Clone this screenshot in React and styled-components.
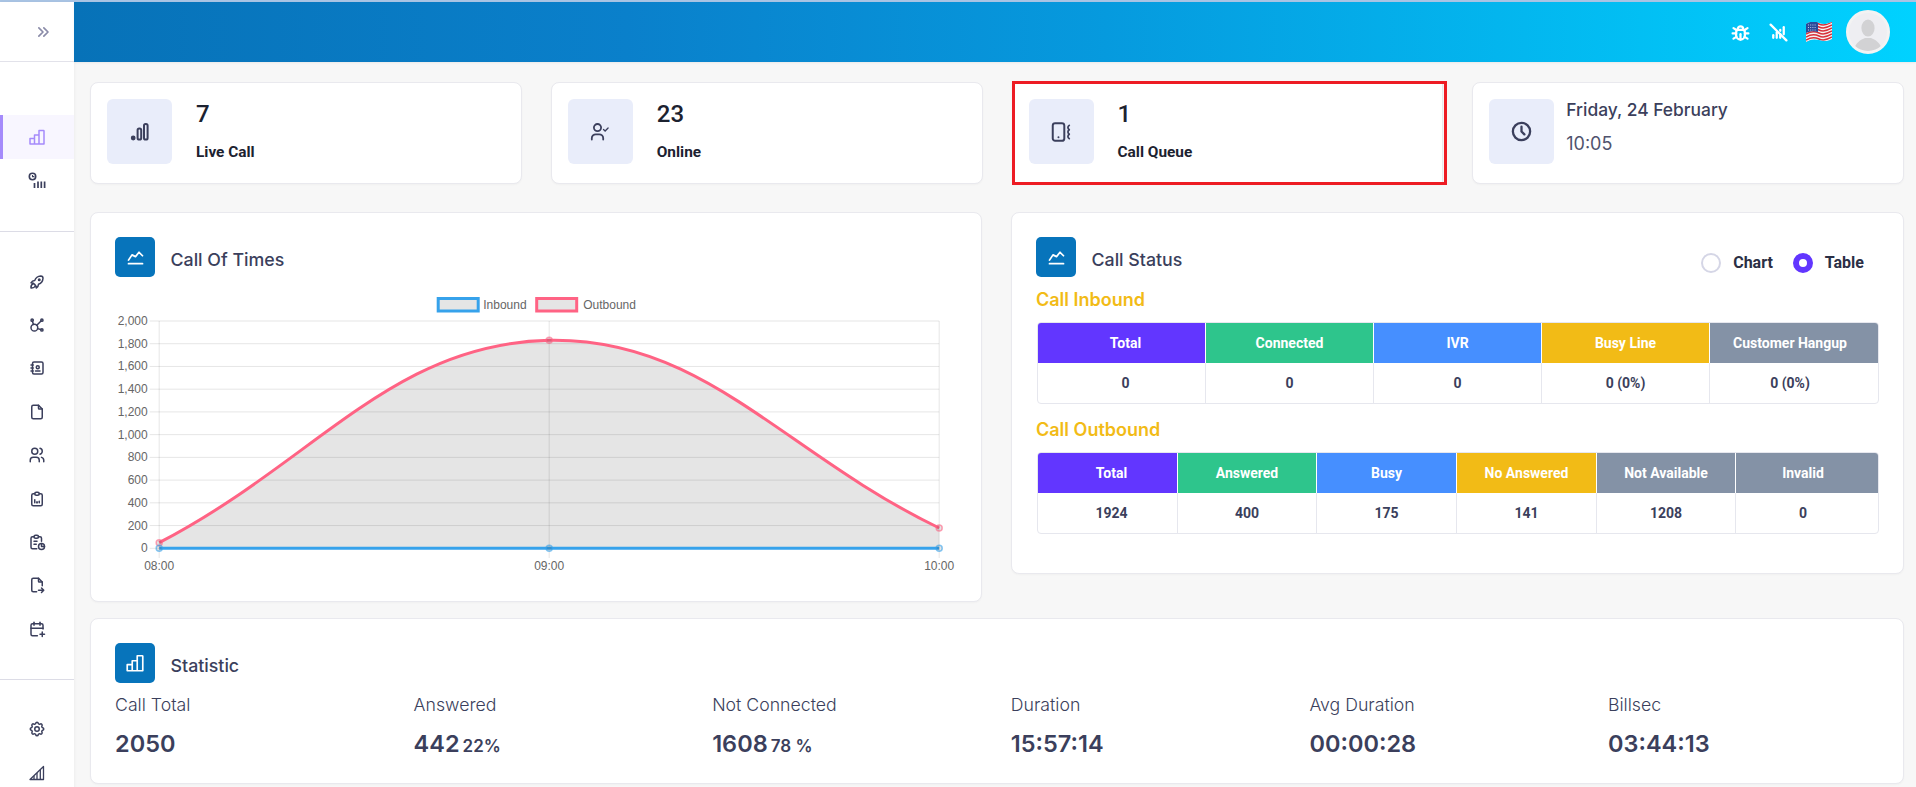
import React from 'react';
import styled, { createGlobalStyle } from 'styled-components';
import {
  TbChevronsRight, TbRocket, TbAffiliate, TbAddressBook, TbFile, TbUsers,
  TbClipboardData, TbReport, TbFileExport, TbCalendarPlus, TbSettings,
  TbBug, TbAntennaBarsOff, TbClock, TbChartLine,
} from 'react-icons/tb';

const GlobalStyle = createGlobalStyle`
  html, body { margin: 0; padding: 0; height: 787px; overflow: hidden; }
  body { background: #f7f7f7; font-family: Inter, "Liberation Sans", sans-serif; }
  * { box-sizing: border-box; }
`;

const Page = styled.div`
  display: grid;
  grid-template-columns: 74px 1fr;
  border-top: 2px solid #a9c4e4;
  height: 787px;
`;

const Sidebar = styled.aside`
  background: #fff;
  display: flex;
  flex-direction: column;
  box-shadow: 1px 0 3px rgba(0, 0, 0, 0.04);
`;

const SideTop = styled.div`
  height: 60px;
  display: flex;
  align-items: center;
  justify-content: center;
  padding-left: 11px;
  color: #8a8ba8;
  font-size: 20px;
  border-bottom: 1px solid #e2e2ea;
`;

const SideGroup = styled.nav`
  padding: ${(p) => (p.$first ? '53px' : '28px')} 0 28px;
  border-bottom: ${(p) => (p.$last ? 'none' : '1px solid #dcdce6')};
`;

const SideItem = styled.div`
  height: ${(p) => p.$h || 43.4}px;
  display: flex;
  align-items: center;
  justify-content: center;
  font-size: 18px;
  color: ${(p) => (p.$active ? '#a58bfb' : '#3b3f5c')};
  background: ${(p) => (p.$active ? '#f8f6ff' : 'transparent')};
  border-left: 3px solid ${(p) => (p.$active ? '#a58bfb' : 'transparent')};
  padding-right: 3px;
`;

const Main = styled.main`
  min-width: 0;
`;

const Header = styled.header`
  height: 60px;
  background: linear-gradient(90deg, #0772b8 0%, #0a80cb 30%, #069ade 56%, #00d2ff 100%);
  display: flex;
  align-items: center;
  justify-content: flex-end;
  padding-right: 26px;
  color: #fff;
  box-shadow: 0 1px 2px rgba(0, 0, 0, 0.06);
`;

const HeaderIcon = styled.span`
  display: flex;
  font-size: 21px;
  margin-right: 17px;
`;

const Flag = styled.svg`
  width: 26px;
  height: 20px;
  margin-right: 14px;
`;

const Avatar = styled.div`
  width: 44px;
  height: 44px;
  border-radius: 50%;
  background: #eeeef2;
  border: 3px solid #f3f3f3;
  overflow: hidden;
  display: flex;
`;

const Content = styled.div`
  padding: 20px 12px 0 16px;
`;

const TopRow = styled.div`
  display: grid;
  grid-template-columns: repeat(4, 1fr);
  gap: 29px;
`;

const Card = styled.section`
  background: #fff;
  border: 1px solid #e9e9ee;
  border-radius: 8px;
  box-shadow: 0 1px 2px rgba(0, 0, 0, 0.03);
`;

const TopCard = styled(Card)`
  position: relative;
  height: 102px;
  padding: 16px;
  display: flex;
  gap: ${(p) => p.$gap || 24}px;
  ${(p) =>
    p.$marked &&
    `
    border-radius: 0;
    &::after {
      content: '';
      position: absolute;
      inset: -2px -5px -2px -1px;
      border: 3px solid #ed1c24;
    }
  `}
`;

const IconBox = styled.div`
  width: 65px;
  height: 65px;
  flex: none;
  border-radius: 6px;
  background: #e9edfa;
  color: #3b3f5c;
  font-size: 23px;
  display: flex;
  align-items: center;
  justify-content: center;
`;

const TopText = styled.div`
  display: flex;
  flex-direction: column;
`;

const TopNumber = styled.div`
  margin-top: 1px;
  font: 500 24px/28px Roboto, sans-serif;
  color: #1c2230;
`;

const TopLabel = styled.div`
  margin-top: 14px;
  font: 700 15.4px/20px Roboto, sans-serif;
  color: #1c2230;
`;

const DateLine = styled.div`
  font: 500 17.4px/24px Inter, sans-serif;
  color: #3b3f5c;
  margin-top: -1px;
`;

const TimeLine = styled.div`
  font: 400 18px/24px Inter, sans-serif;
  color: #50536e;
  margin-top: 10px;
`;

const MidRow = styled.div`
  display: grid;
  grid-template-columns: 1fr 1fr;
  gap: 29px;
  align-items: start;
  margin-top: 28px;
`;

const Panel = styled(Card)`
  padding: 24px;
  height: ${(p) => p.$h}px;
`;

const StatPanel = styled(Panel)`
  margin-top: 15.5px;
`;

const PanelHead = styled.div`
  display: flex;
  align-items: flex-start;
  gap: 15.5px;
`;

const HeadIcon = styled.div`
  width: 40px;
  height: 40px;
  flex: none;
  border-radius: 5px;
  background: #0774bb;
  color: #fff;
  font-size: 21px;
  display: flex;
  align-items: center;
  justify-content: center;
`;

const PanelTitle = styled.h3`
  margin: 12px 0 0;
  font: 500 17.8px/22px Inter, sans-serif;
  color: #3b3f5c;
`;

const ChartSvg = styled.svg`
  display: block;
  width: 842px;
  height: 300px;
  margin-top: 10px;
  font-family: "Liberation Sans", Arial, sans-serif;
  font-size: 12px;
  fill: #666;
`;

const Radios = styled.div`
  margin-left: auto;
  margin-right: 15px;
  margin-top: 16px;
  display: flex;
  align-items: center;
  font: 700 16px/20px Roboto, sans-serif;
  color: #2b2f45;
`;

const Radio = styled.span`
  width: 20px;
  height: 20px;
  border-radius: 50%;
  margin-right: 12px;
  margin-left: ${(p) => (p.$on ? '20px' : '0')};
  background: #fff;
  border: ${(p) => (p.$on ? '6px solid #6236ff' : '2px solid #d5d6e6')};
`;

const SubTitle = styled.h4`
  margin: ${(p) => p.$top}px 0 11px;
  font: 600 18px/22px Inter, sans-serif;
  color: #f2bb16;
`;

const StatusTable = styled.table`
  width: 840px;
  margin-left: 1px;
  border-collapse: separate;
  border-spacing: 0;
  table-layout: fixed;
  border: 1px solid #e6e7ee;
  border-radius: 4px;
  overflow: hidden;
  font: 700 14px/20px Roboto, sans-serif;

  th, td {
    height: 40px;
    padding: 0;
    text-align: center;
    vertical-align: middle;
    border-right: 1px solid #e6e7ee;
  }
  th:first-child, td:first-child { padding-left: 8px; }
  th:last-child, td:last-child { border-right: none; padding-right: 8px; }
  th { color: #fff; font-weight: 700; border-right-color: #fff; }
  td { color: #3b3f5c; }
`;

const HeadCell = styled.th`
  background: ${(p) => p.$color};
`;

const StatsGrid = styled.div`
  display: grid;
  grid-template-columns: repeat(6, 1fr);
  gap: 27.6px;
  margin-top: 10px;
`;

const StatLabel = styled.div`
  font: 300 17.7px/24px Inter, sans-serif;
  color: #3b3f5c;
`;

const StatValue = styled.div`
  margin-top: 12px;
  font: 600 23.5px/30px Inter, sans-serif;
  color: #3b3f5c;
`;

const StatPercent = styled.small`
  font-size: 17px;
  margin-left: 3px;
`;

const COLORS = { total: '#6236ff', green: '#2ec58c', blue: '#468fff', yellow: '#f2bb16', gray: '#8492a6' };

const inbound = {
  heads: [['Total', COLORS.total], ['Connected', COLORS.green], ['IVR', COLORS.blue], ['Busy Line', COLORS.yellow], ['Customer Hangup', COLORS.gray]],
  values: ['0', '0', '0', '0 (0%)', '0 (0%)'],
};

const outbound = {
  heads: [['Total', COLORS.total], ['Answered', COLORS.green], ['Busy', COLORS.blue], ['No Answered', COLORS.yellow], ['Not Available', COLORS.gray], ['Invalid', COLORS.gray]],
  values: ['1924', '400', '175', '141', '1208', '0'],
};

const stats = [
  { label: 'Call Total', value: '2050' },
  { label: 'Answered', value: '442', percent: '22%' },
  { label: 'Not Connected', value: '1608', percent: '78 %' },
  { label: 'Duration', value: '15:57:14' },
  { label: 'Avg Duration', value: '00:00:28' },
  { label: 'Billsec', value: '03:44:13' },
];

// chart geometry is kept in page pixels, the svg viewBox starts at the chart's corner
const X = [159.5, 549.5, 939.5];
const Y0 = 548.3;
const STEP = 22.73;
const yTicks = ['0', '200', '400', '600', '800', '1,000', '1,200', '1,400', '1,600', '1,800', '2,000'];
const AREA = 'M159.5 542.7C315.5 461.7 392.3 343.3 549.5 340.3C704.3 337.4 783.5 452.9 939.5 528';

function Dot({ x, y, color }) {
  return <circle cx={x} cy={y} r="3" fill="rgba(0,0,0,0.1)" stroke={color} strokeOpacity="0.6" strokeWidth="1.5" />;
}

function CallChart() {
  return (
    <ChartSvg viewBox="115.3 287 842 300">
      <rect x="438.5" y="298.5" width="40" height="12.5" fill="rgba(0,0,0,0.1)" stroke="#36a2eb" strokeWidth="3" />
      <text x="483.5" y="309">Inbound</text>
      <rect x="537" y="298.5" width="40" height="12.5" fill="rgba(0,0,0,0.1)" stroke="#ff6384" strokeWidth="3" />
      <text x="583.5" y="309">Outbound</text>

      {yTicks.map((t, i) => {
        const y = Y0 - i * STEP;
        return (
          <g key={t}>
            <line x1="150" x2="939.5" y1={y} y2={y} stroke="rgba(0,0,0,0.1)" />
            <text x="148" y={y + 4} textAnchor="end">{t}</text>
          </g>
        );
      })}
      {X.map((x, i) => (
        <g key={x}>
          <line x1={x} x2={x} y1="321" y2="558" stroke="rgba(0,0,0,0.1)" />
          <text x={x} y="570" textAnchor="middle">{['08:00', '09:00', '10:00'][i]}</text>
        </g>
      ))}

      <path d={`${AREA}L939.5 ${Y0}L159.5 ${Y0}Z`} fill="rgba(0,0,0,0.1)" />
      <path d={AREA} fill="none" stroke="#ff6384" strokeWidth="3" />
      <Dot x={159.5} y={542.7} color="#ff6384" />
      <Dot x={549.5} y={340.3} color="#ff6384" />
      <Dot x={939.5} y={528} color="#ff6384" />
      <line x1="159.5" x2="939.5" y1={Y0} y2={Y0} stroke="#36a2eb" strokeWidth="3" />
      {X.map((x) => <Dot key={x} x={x} y={Y0} color="#36a2eb" />)}
    </ChartSvg>
  );
}

function StatusGrid({ heads, values, widths }) {
  return (
    <StatusTable>
      <colgroup>
        {widths.map((w, i) => <col key={i} style={{ width: w }} />)}
      </colgroup>
      <thead>
        <tr>{heads.map(([name, color]) => <HeadCell key={name} $color={color}>{name}</HeadCell>)}</tr>
      </thead>
      <tbody>
        <tr>{values.map((v, i) => <td key={i}>{v}</td>)}</tr>
      </tbody>
    </StatusTable>
  );
}

// hand drawn icons for the ones the packages don't have in this shape
function BarsIcon({ size = 18 }) {
  return (
    <svg width={size} height={size} viewBox="0 0 18 18" fill="none" stroke="currentColor" strokeWidth="1.5" strokeLinejoin="round">
      <path d="M2 10.5h4.5V16H2zM6.5 7H11v9H6.5zM11 2.5h4.5a.5.5 0 0 1 .5.5v13h-5z" />
    </svg>
  );
}

function ClockBars() {
  return (
    <svg width="18" height="18" viewBox="0 0 18 18" fill="none" stroke="currentColor">
      <circle cx="4.5" cy="4.5" r="3.2" strokeWidth="1.6" />
      <path d="M4.5 3v1.6H6.4" strokeWidth="1.1" />
      <path d="M6.5 11v5M10 9.5V16M13.3 9.5V16M16.6 9.5V16" strokeWidth="1.7" />
    </svg>
  );
}

function SignalTriangle() {
  return (
    <svg width="18" height="18" viewBox="0 0 18 18" fill="none" stroke="currentColor" strokeWidth="1.3" strokeLinejoin="round">
      <path d="M2 15.5L15.5 2.5v13z" />
      <path d="M6 15V12M9 15V9M12.3 15V6" />
    </svg>
  );
}

function LiveBars() {
  return (
    <svg width="20" height="20" viewBox="0 0 20 20" fill="none" stroke="currentColor" strokeWidth="2" strokeLinejoin="round">
      <circle cx="3.2" cy="16" r="1.4" fill="currentColor" />
      <rect x="7.6" y="6.5" width="3.6" height="11" rx="1.6" />
      <rect x="14" y="2" width="3.6" height="15.5" rx="1.6" />
    </svg>
  );
}

function UserCheckIcon() {
  return (
    <svg width="20" height="20" viewBox="0 0 20 20" fill="none" stroke="currentColor" strokeWidth="1.8" strokeLinecap="round">
      <circle cx="7.5" cy="5.6" r="3.6" />
      <path d="M1.8 17.5v-1.2a4 4 0 0 1 4-4h3.4a4 4 0 0 1 4 4v1.2" />
      <path d="M13.5 7.5l1.6 1.5 3-3" strokeWidth="1.3" />
    </svg>
  );
}

function PhoneQueueIcon() {
  return (
    <svg width="22" height="22" viewBox="0 0 20 20" fill="none" stroke="currentColor" strokeWidth="1.8" strokeLinecap="round" strokeLinejoin="round">
      <rect x="2.5" y="2" width="10.5" height="16" rx="2.2" />
      <circle cx="7.7" cy="14.8" r="0.4" strokeWidth="1" />
      <path d="M17.5 4c-1.6 1.2-1.6 2.8 0 4c-1.6 1.2-1.6 2.8 0 4c-1.6 1.2-1.6 2.8 0 4" strokeWidth="1.6" />
    </svg>
  );
}

function UsFlag() {
  const wave = (y) => `M0 ${y + 2}C5 ${y - 1} 9 ${y - 1} 13 ${y + 1}S21 ${y + 2} 26 ${y - 1}`;
  return (
    <Flag viewBox="0 0 26 20">
      <defs>
        <clipPath id="flag-shape">
          <path d="M0 2C5 -1 9 -1 13 1S21 2 26 0V17C21 20 17 19 13 18S5 17 0 20Z" />
        </clipPath>
      </defs>
      <g clipPath="url(#flag-shape)">
        <rect width="26" height="20" fill="#f4f4f4" />
        {[1, 4, 7, 10, 13, 16, 19].map((y) => (
          <path key={y} d={wave(y)} fill="none" stroke="#d8303a" strokeWidth="1.5" />
        ))}
        <path d="M0 0H12V10C8 9 4 9 0 11Z" fill="#2a4a9a" />
        <path d="M2 3h8M2 5.5h8M2 8h8" stroke="#cfd8f0" strokeWidth="0.9" strokeDasharray="1 1.2" />
      </g>
    </Flag>
  );
}

function App() {
  return (
    <>
      <GlobalStyle />
      <Page>
        <Sidebar>
          <SideTop><TbChevronsRight /></SideTop>
          <SideGroup $first>
            <SideItem $active $h={44}><BarsIcon /></SideItem>
            <SideItem $h={44}><ClockBars /></SideItem>
          </SideGroup>
          <SideGroup>
            <SideItem><TbRocket /></SideItem>
            <SideItem><TbAffiliate /></SideItem>
            <SideItem><TbAddressBook /></SideItem>
            <SideItem><TbFile /></SideItem>
            <SideItem><TbUsers /></SideItem>
            <SideItem><TbClipboardData /></SideItem>
            <SideItem><TbReport /></SideItem>
            <SideItem><TbFileExport /></SideItem>
            <SideItem><TbCalendarPlus /></SideItem>
          </SideGroup>
          <SideGroup $last>
            <SideItem><TbSettings /></SideItem>
            <SideItem><SignalTriangle /></SideItem>
          </SideGroup>
        </Sidebar>

        <Main>
          <Header>
            <HeaderIcon><TbBug strokeWidth={2.6} /></HeaderIcon>
            <HeaderIcon><TbAntennaBarsOff strokeWidth={2.6} /></HeaderIcon>
            <UsFlag />
            <Avatar>
              <svg viewBox="0 0 38 38" width="38" height="38">
                <ellipse cx="19" cy="15" rx="6.6" ry="8.6" fill="#d2d2d4" />
                <path d="M5 38C6 29 12 27 16 25H22C26 27 32 29 33 38Z" fill="#d2d2d4" />
              </svg>
            </Avatar>
          </Header>

          <Content>
            <TopRow>
              <TopCard>
                <IconBox><LiveBars /></IconBox>
                <TopText><TopNumber>7</TopNumber><TopLabel>Live Call</TopLabel></TopText>
              </TopCard>
              <TopCard>
                <IconBox><UserCheckIcon /></IconBox>
                <TopText><TopNumber>23</TopNumber><TopLabel>Online</TopLabel></TopText>
              </TopCard>
              <TopCard $marked>
                <IconBox><PhoneQueueIcon /></IconBox>
                <TopText><TopNumber>1</TopNumber><TopLabel>Call Queue</TopLabel></TopText>
              </TopCard>
              <TopCard $gap={12}>
                <IconBox><TbClock strokeWidth={2.4} /></IconBox>
                <TopText><DateLine>Friday, 24 February</DateLine><TimeLine>10:05</TimeLine></TopText>
              </TopCard>
            </TopRow>

            <MidRow>
              <Panel $h={390}>
                <PanelHead>
                  <HeadIcon><TbChartLine /></HeadIcon>
                  <PanelTitle>Call Of Times</PanelTitle>
                </PanelHead>
                <CallChart />
              </Panel>
              <Panel $h={362}>
                <PanelHead>
                  <HeadIcon><TbChartLine /></HeadIcon>
                  <PanelTitle>Call Status</PanelTitle>
                  <Radios>
                    <Radio />Chart
                    <Radio $on />Table
                  </Radios>
                </PanelHead>
                <SubTitle $top={12}>Call Inbound</SubTitle>
                <StatusGrid {...inbound} widths={[168, 168, 168, 168, 168]} />
                <SubTitle $top={14.5}>Call Outbound</SubTitle>
                <StatusGrid {...outbound} widths={[140, 139, 140, 140, 139, 142]} />
              </Panel>
            </MidRow>

            <StatPanel $h={166}>
              <PanelHead>
                <HeadIcon><BarsIcon size={20} /></HeadIcon>
                <PanelTitle>Statistic</PanelTitle>
              </PanelHead>
              <StatsGrid>
                {stats.map((s) => (
                  <div key={s.label}>
                    <StatLabel>{s.label}</StatLabel>
                    <StatValue>
                      {s.value}
                      {s.percent && <StatPercent>{s.percent}</StatPercent>}
                    </StatValue>
                  </div>
                ))}
              </StatsGrid>
            </StatPanel>
          </Content>
        </Main>
      </Page>
    </>
  );
}

export default App;
